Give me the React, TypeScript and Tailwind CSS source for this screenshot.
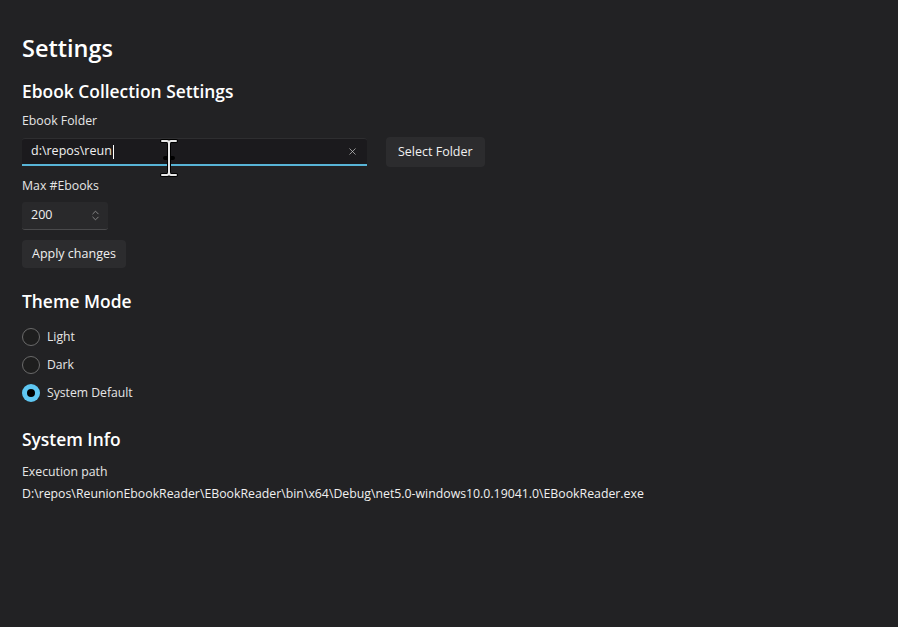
import { ChevronsUpDown, X } from "lucide-react";

const Radio = (props: { label: string; checked?: boolean }) => {
  return (
    <div className="flex items-center h-[28px]">
      {props.checked ? (
        <div className="w-[18px] h-[18px] rounded-full bg-[#5fc7f2] flex items-center justify-center">
          <div className="w-[8px] h-[8px] rounded-full bg-black" />
        </div>
      ) : (
        <div className="w-[18px] h-[18px] rounded-full border border-[#6a6a6a] bg-[#1e1e1e]" />
      )}
      <span className="ml-[7px] text-[12.2px] text-[#e6e6e6]">{props.label}</span>
    </div>
  );
};

export default function App() {
  return (
    <div
      className="w-[898px] h-[627px] bg-[#222224] text-white relative overflow-hidden"
      style={{ fontFamily: '"Open Sans", "Noto Sans", sans-serif' }}
    >
      <div className="pl-[22px] pt-[32px]">
        <h1 className="text-[23.5px] font-semibold leading-[32px]">Settings</h1>
        <h2 className="mt-[15px] text-[17.4px] font-semibold leading-[24px]">Ebook Collection Settings</h2>

        <div className="mt-[10px] text-[12.3px] text-[#e6e6e6] leading-[16px]">Ebook Folder</div>
        <div className="mt-[8px] flex items-center gap-[19px]">
          <div className="w-[345px] h-[28px] bg-[#1b1a1d] border-t border-[#2e2e30] border-b-2 border-b-[#58b4d6] rounded-t-[3px] flex items-center pl-[9px] pr-[9px]">
            <span className="text-[12.5px] text-[#f0f0f0]">d:\repos\reun</span>
            <span className="w-px h-[14px] bg-white ml-px" />
            <X className="ml-auto text-[#c4c4c4]" size={11} strokeWidth={1.6} />
          </div>
          <button className="h-[30px] px-[12px] rounded-[4px] bg-[#2c2c2e] text-[12.5px] text-[#f0f0f0]">
            Select Folder
          </button>
        </div>

        <div className="mt-[11px] text-[12.3px] text-[#e6e6e6] leading-[16px]">Max #Ebooks</div>
        <div className="mt-[8px] w-[86px] h-[28px] bg-[#29292b] border-b border-[#4a4a4c] rounded-[3px] flex items-center pl-[9px] pr-[6px]">
          <span className="text-[12.5px] text-[#f0f0f0]">200</span>
          <ChevronsUpDown className="ml-auto text-[#9a9a9a]" size={13} strokeWidth={1.5} />
        </div>

        <button className="mt-[10px] h-[28px] px-[10px] rounded-[4px] bg-[#2c2c2e] text-[12.5px] text-[#f0f0f0]">
          Apply changes
        </button>

        <h2 className="mt-[21px] text-[17.4px] font-semibold leading-[24px]">Theme Mode</h2>
        <div className="mt-[10px] flex flex-col">
          <Radio label="Light" />
          <Radio label="Dark" />
          <Radio label="System Default" checked />
        </div>

        <h2 className="mt-[20px] text-[17.4px] font-semibold leading-[24px]">System Info</h2>
        <div className="mt-[13px] text-[12.3px] text-[#e6e6e6] leading-[16px]">Execution path</div>
        <div className="mt-[6px] text-[12.3px] text-[#f0f0f0] leading-[16px]">
          D:\repos\ReunionEbookReader\EBookReader\bin\x64\Debug\net5.0-windows10.0.19041.0\EBookReader.exe
        </div>
      </div>

      <svg className="absolute left-[158px] top-[139px]" width="22" height="38" viewBox="0 0 22 38">
        <path
          d="M4 2 H9 Q11 2 11 5 V33 Q11 36 9 36 H4 M18 2 H13 Q11 2 11 5 M11 33 Q11 36 13 36 H18 M7 19 H15"
          fill="none"
          stroke="#000"
          strokeWidth="4"
          strokeLinecap="round"
        />
        <path
          d="M4 2 H9 Q11 2 11 5 V33 Q11 36 9 36 H4 M18 2 H13 Q11 2 11 5 M11 33 Q11 36 13 36 H18"
          fill="none"
          stroke="#e8e8e8"
          strokeWidth="2"
          strokeLinecap="round"
        />
      </svg>
    </div>
  );
}
